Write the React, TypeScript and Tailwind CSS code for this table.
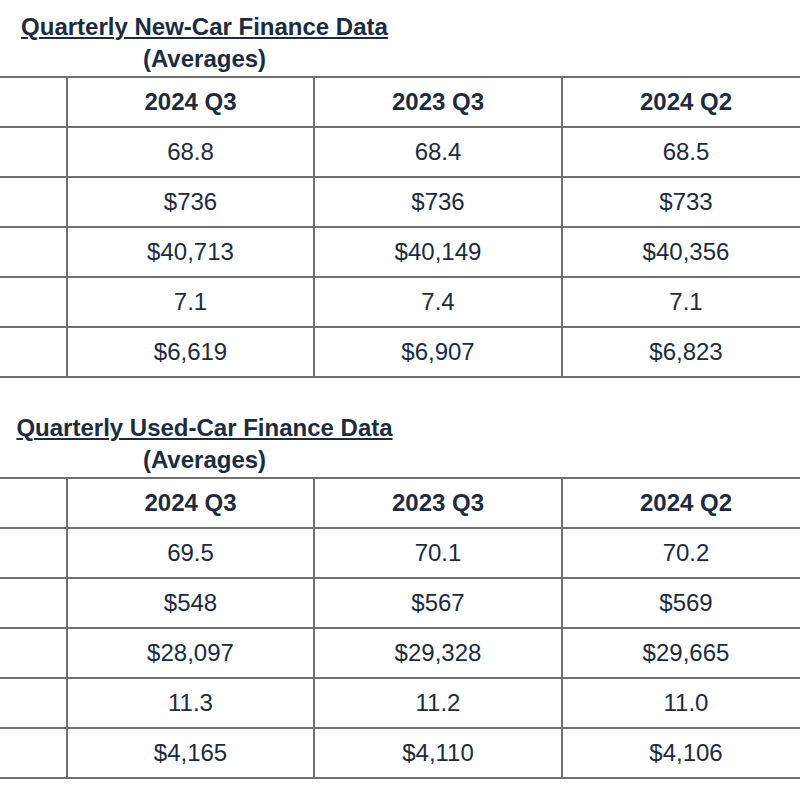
import React from "react";

type Section = {
  title: string;
  rows: string[][];
};

const sections: Section[] = [
  {
    title: "Quarterly New-Car Finance Data",
    rows: [
      ["68.8", "68.4", "68.5"],
      ["$736", "$736", "$733"],
      ["$40,713", "$40,149", "$40,356"],
      ["7.1", "7.4", "7.1"],
      ["$6,619", "$6,907", "$6,823"],
    ],
  },
  {
    title: "Quarterly Used-Car Finance Data",
    rows: [
      ["69.5", "70.1", "70.2"],
      ["$548", "$567", "$569"],
      ["$28,097", "$29,328", "$29,665"],
      ["11.3", "11.2", "11.0"],
      ["$4,165", "$4,110", "$4,106"],
    ],
  },
];

const headers = ["2024 Q3", "2023 Q3", "2024 Q2"];

function Row({ cells, bold, first }: { cells: string[]; bold?: boolean; first?: boolean }) {
  return (
    <div
      className={`grid grid-cols-[66px_247px_248px_248px] h-[50px] border-b-2 border-[#707070] ${
        first ? "border-t-2 h-[52px]" : ""
      }`}
    >
      <div />
      {cells.map((c, i) => (
        <div
          key={i}
          className={`border-l-2 border-[#707070] flex items-center justify-center ${
            bold ? "font-bold" : "font-normal"
          }`}
        >
          {c}
        </div>
      ))}
    </div>
  );
}

function SectionBlock({ s, idx }: { s: Section; idx: number }) {
  return (
    <div className={idx > 0 ? "mt-[23px]" : ""}>
      <div className="pt-[11px] w-[409px] text-center font-bold leading-[32px]">
        <div className="underline decoration-[1.5px] underline-offset-[2px]">{s.title}</div>
        <div>(Averages)</div>
      </div>
      <div className="mt-px w-[809px]">
        <Row cells={headers} bold first />
        {s.rows.map((r, i) => (
          <Row key={i} cells={r} />
        ))}
      </div>
    </div>
  );
}

export default function App() {
  return (
    <div
      className="w-[800px] h-[800px] overflow-hidden bg-white text-[#1c2b40] text-[24px] leading-[32px]"
      style={{ fontFamily: '"Liberation Sans", Arial, sans-serif' }}
    >
      {sections.map((s, i) => (
        <SectionBlock key={i} s={s} idx={i} />
      ))}
    </div>
  );
}
